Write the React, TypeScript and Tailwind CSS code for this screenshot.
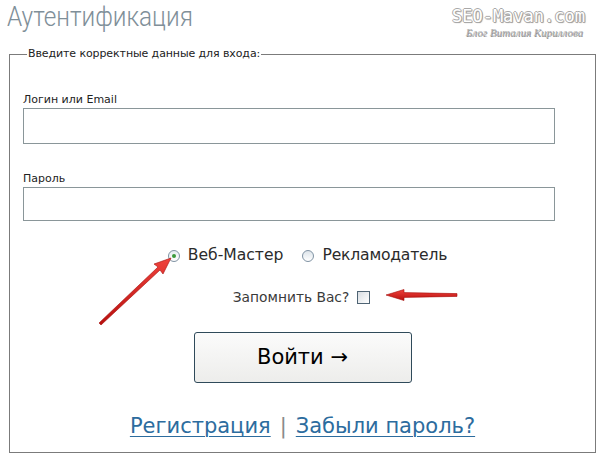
import React from "react";

function Arrows() {
  return (
    <svg
      className="pointer-events-none absolute left-0 top-0"
      width="605"
      height="461"
      viewBox="0 0 605 461"
    >
      <defs>
        <linearGradient id="rg" x1="0" y1="0" x2="0" y2="1">
          <stop offset="0" stopColor="#f0423c" />
          <stop offset="1" stopColor="#b8100e" />
        </linearGradient>
      </defs>
      <path
        d="M99 323 L101 325 L160 270 L163 274 L171 258 L154 264 L158 267 Z"
        fill="url(#rg)"
        stroke="#a40d0c"
        strokeWidth="0.6"
        strokeLinejoin="round"
      />
      <path
        d="M457 293.6 L457 296.4 L404 297.4 L404 300.5 L386 295 L404 289.5 L404 292.6 Z"
        fill="url(#rg)"
        stroke="#a40d0c"
        strokeWidth="0.6"
        strokeLinejoin="round"
      />
    </svg>
  );
}

export default function App() {
  const verdana = { fontFamily: '"DejaVu Sans", Verdana, sans-serif' };
  return (
    <div className="relative h-[461px] w-[605px] overflow-hidden bg-white">
      <div className="flex h-[47px] items-start justify-between">
        <div
          className="ml-[7px] origin-left scale-x-[0.9] text-[27px] font-light leading-[34px] text-[#7f8f99]"
          style={{ fontFamily: 'Roboto, "Noto Sans", sans-serif' }}
        >
          Аутентификация
        </div>
        <div className="mr-[20px] mt-[6px] flex flex-col items-end">
          <div
            className="text-[17px] leading-[20px] text-white"
            style={{
              fontFamily: '"DejaVu Sans Mono", monospace',
              textShadow:
                "1px 0 0 #a8a8a8, -1px 0 0 #a8a8a8, 0 1px 0 #a8a8a8, 0 -1px 0 #a8a8a8, 1px 1px 1px #8a8a8a",
            }}
          >
            SEO-Mavan.com
          </div>
          <div
            className="mr-[2px] mt-[1px] text-[11px] italic leading-[11px] text-[#b4b4b4]"
            style={{ fontFamily: '"Liberation Serif", serif', textShadow: "0.5px 0.5px 0 #8a8a8a" }}
          >
            Блог Виталия Кириллова
          </div>
        </div>
      </div>

      <fieldset className="ml-[9px] h-[406px] w-[587px] border border-[#7b7b7b] px-[13px]">
        <legend
          className="ml-[4px] px-[1px] text-[11px] leading-[14px] tracking-[-0.1px] text-[#222]"
          style={verdana}
        >
          Введите корректные данные для входа:
        </legend>

        <div className="mt-[32px] text-[11px] leading-[14px] text-[#222]" style={verdana}>
          Логин или Email
        </div>
        <div className="mt-[1px] h-[36px] w-[532px] border border-[#8a9699] bg-white" />

        <div className="mt-[28px] text-[11px] leading-[14px] text-[#222]" style={verdana}>
          Пароль
        </div>
        <div className="mt-[1px] h-[34px] w-[532px] border border-[#8a9699] bg-white" />

        <div className="mt-[25px] flex h-[20px] items-center justify-center pl-[10px] text-[15.6px] text-[#2b2b2b]" style={verdana}>
          <span className="flex items-center">
            <span className="flex h-[12px] w-[12px] items-center justify-center rounded-full border border-[#7f92a3] bg-gradient-to-b from-[#e6ecf0] to-white">
              <span className="h-[4px] w-[4px] rounded-full bg-[#3c9a3c]" />
            </span>
            <span className="ml-[8px]">Веб-Мастер</span>
          </span>
          <span className="ml-[19px] flex items-center">
            <span className="h-[12px] w-[12px] rounded-full border border-[#7f92a3] bg-gradient-to-b from-[#dde4ea] to-white" />
            <span className="ml-[8px] tracking-[-0.2px]">Рекламодатель</span>
          </span>
        </div>

        <div className="mt-[21px] flex h-[20px] items-center justify-center pr-[2px] text-[13.8px] text-[#3a3a3a]" style={verdana}>
          <span>Запомнить Вас?</span>
          <span className="ml-[8px] h-[13px] w-[13px] border border-[#4f6474] bg-gradient-to-br from-[#d8dde2] to-white" />
        </div>

        <div className="mt-[25px] flex justify-center">
          <div
            className="flex h-[51px] w-[218px] items-center justify-center rounded-[3px] border border-[#2f4a5a] bg-gradient-to-b from-[#fbfbfb] to-[#ededeb] text-[21px] text-black"
            style={verdana}
          >
            Войти →
          </div>
        </div>

        <div className="mt-[30px] flex h-[28px] items-center justify-center text-[21px]" style={verdana}>
          <span className="text-[#2c6c9e] underline decoration-1 underline-offset-[3px]">Регистрация</span>
          <span className="mx-[9px] text-[#8a8a8a]">|</span>
          <span className="text-[#2c6c9e] underline decoration-1 underline-offset-[3px]">Забыли пароль?</span>
        </div>
      </fieldset>

      <Arrows />
    </div>
  );
}
